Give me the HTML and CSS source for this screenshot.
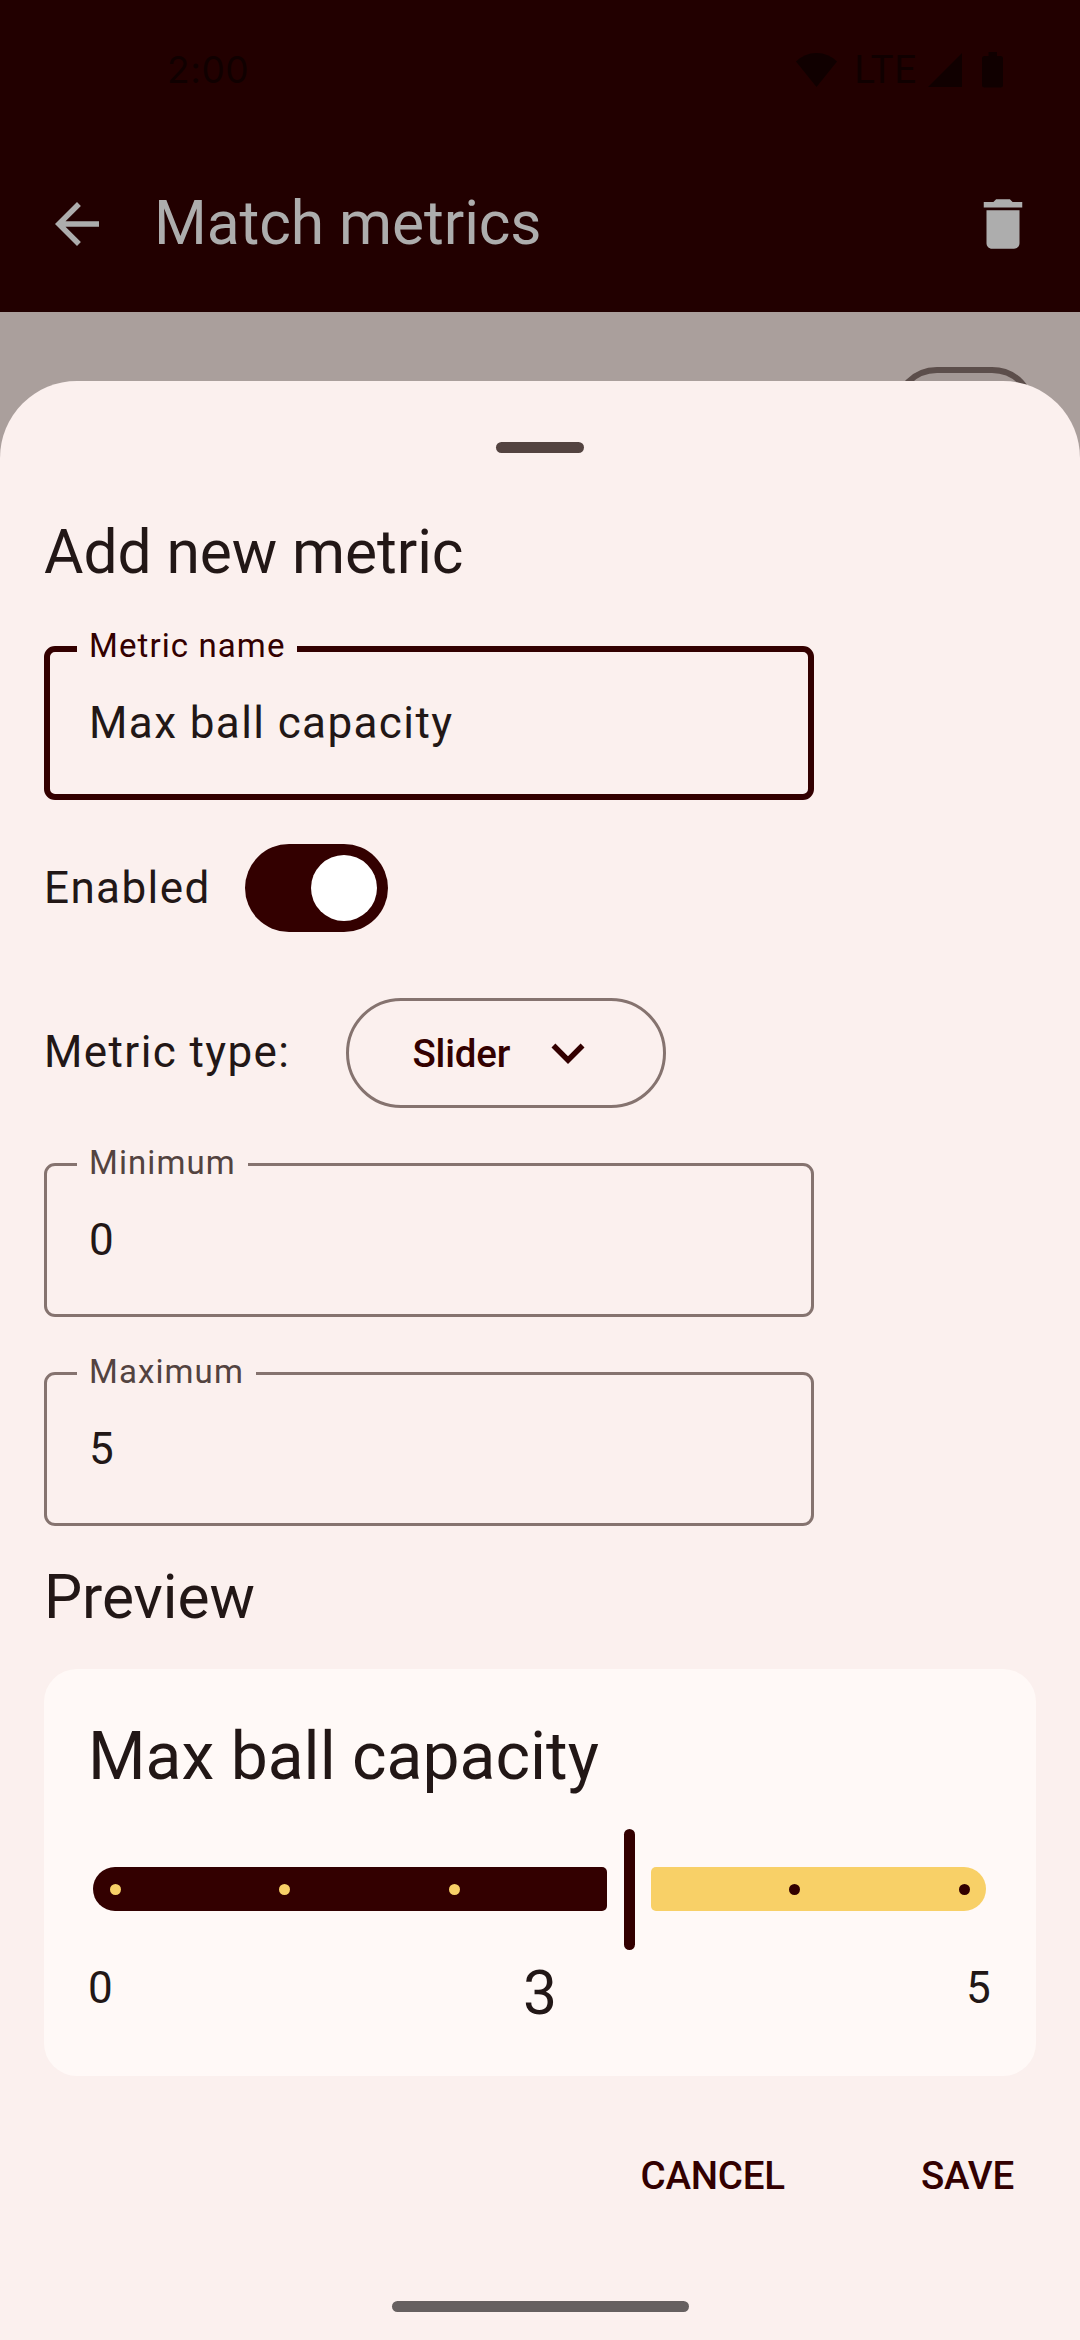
FILE: index.html
```html
<!DOCTYPE html>
<html lang="en">
<head>
<meta charset="utf-8">
<title>Match metrics</title>
<link rel="stylesheet" href="styles.css">
</head>
<body>
<div class="screen">
  <header class="top">
    <div class="status">
      <span class="clock">2:00</span>
      <div class="signals">
        <svg class="wifi" viewBox="0 0 41 34"><path d="M0 8.500Q8.500 0 20.500 0T41 8.500L20.500 34Z"/></svg>
        <span class="network">LTE</span>
        <svg class="cell" viewBox="0 0 34 34"><path d="M34 0V34H0Z"/></svg>
        <svg class="battery" viewBox="0 0 21 36"><path d="M6.500 0H15V4H18.500Q21 4 21 6.500V33Q21 35.500 18.500 35.500H2.500Q0 35.500 0 33V6.500Q0 4 2.500 4H6.500Z"/></svg>
      </div>
    </div>
    <div class="app-bar">
      <svg class="icon" viewBox="0 0 24 24"><path d="M20 11H7.830l5.590-5.590L12 4l-8 8 8 8 1.410-1.410L7.830 13H20z"/></svg>
      <h1 class="heading app-title">Match metrics</h1>
      <svg class="icon" viewBox="0 0 24 24"><path d="M6 19c0 1.100.9 2 2 2h8c1.100 0 2-.9 2-2V7H6zM19 4h-3.500l-1-1h-5l-1 1H5v2h14z"/></svg>
    </div>
  </header>
  <div class="list"><div class="list-switch"></div></div>

  <main class="sheet">
    <div class="handle"></div>
    <h2 class="heading">Add new metric</h2>
    <div class="field focused"><span class="label">Metric name</span><span class="value">Max ball capacity</span></div>
    <div class="row enabled">
      <span class="body">Enabled</span>
      <div class="switch"><div class="thumb"></div></div>
    </div>
    <div class="row type">
      <span class="body">Metric type:</span>
      <div class="select">
        <span>Slider</span>
        <svg class="icon" viewBox="0 0 24 24"><path d="M7.410 8.590L12 13.170l4.590-4.580L18 10l-6 6-6-6z"/></svg>
      </div>
    </div>
    <div class="field"><span class="label">Minimum</span><span class="value">0</span></div>
    <div class="field"><span class="label">Maximum</span><span class="value">5</span></div>
    <h2 class="heading preview-heading">Preview</h2>
    <section class="card">
      <h3 class="card-title">Max ball capacity</h3>
      <div class="slider">
        <div class="track active"><i class="dot"></i><i class="dot"></i><i class="dot"></i></div>
        <div class="slider-handle"></div>
        <div class="track rest"><i class="dot"></i><i class="dot"></i></div>
      </div>
      <div class="scale">
        <span class="min">0</span>
        <span class="current">3</span>
        <span class="max">5</span>
      </div>
    </section>
    <div class="actions"><span>CANCEL</span><span>SAVE</span></div>
    <div class="nav-pill"></div>
  </main>
</div>
</body>
</html>
```

FILE: styles.css
```css
* { box-sizing: border-box; }
body { margin: 0; font-family: Roboto, sans-serif; color: #221716; }
.screen { width: 1080px; height: 2340px; display: flex; flex-direction: column; background: #aa9f9c; overflow: hidden; }

.top { height: 312px; flex: none; background: #220000; color: #adadad; }
.status { height: 136px; padding: 4px 77px 0 167px; display: flex; justify-content: space-between; align-items: center; color: #100000; }
.clock { font: 400 37px/44px Inter, sans-serif; letter-spacing: 0.6px; }
.signals { display: flex; align-items: center; }
.signals svg { fill: currentColor; display: block; }
.wifi { width: 41px; height: 34px; }
.network { font: 400 38.500px/44px Roboto, sans-serif; letter-spacing: 0.8px; margin: 0 11px 0 17px; }
.cell { width: 34px; height: 34px; }
.battery { width: 21px; height: 36px; margin-left: 20px; }
.app-bar { height: 176px; padding: 0 44px; display: flex; align-items: center; }
.icon { width: 66px; height: 66px; fill: currentColor; display: block; flex: none; }
.heading { margin: 0; font-size: 60.500px; line-height: 77px; font-weight: 400; letter-spacing: -0.08px; }
.app-title { flex: 1; padding: 0 0 2px 44px; }

.list { height: 69px; flex: none; display: flex; justify-content: flex-end; padding: 55px 44px 0; }
.list-switch { flex: none; width: 143px; height: 88px; border: 6px solid #5c4e4b; border-radius: 44px; background: #a39895; }

.sheet { position: relative; flex: none; height: 1959px; padding: 61px 44px 0; background: #fbf0ee; border-radius: 77px 77px 0 0; display: flex; flex-direction: column; }
.handle { width: 88px; height: 11px; margin: 0 auto 61px; border-radius: 6px; background: #534340; }
.field { position: relative; width: 770px; height: 154px; margin-top: 55px; border: 3px solid #85736f; border-radius: 11px; }
.label { position: absolute; left: 30px; top: -25px; padding: 0 12px; background: #fbf0ee; color: #534340; font-size: 33px; line-height: 44px; letter-spacing: 1.100px; white-space: nowrap; }
.value { display: block; padding: 41px 0 0 42px; font-size: 44px; line-height: 66px; letter-spacing: 1.400px; }
.focused { border: 6px solid #330000; }
.focused .label { left: 27px; top: -28px; color: #330000; }
.focused .value { padding: 38px 0 0 39px; }
.row { display: flex; align-items: center; }
.body { font-size: 44px; line-height: 66px; letter-spacing: 1.400px; }
.enabled { margin-top: 44px; gap: 34px; }
.switch { width: 143px; height: 88px; padding: 11px; border-radius: 44px; background: #330000; display: flex; justify-content: flex-end; }
.thumb { width: 66px; height: 66px; border-radius: 50%; background: #fff; }
.type { margin-top: 66px; gap: 56px; }
.type .body { padding-bottom: 2px; }
.select { width: 320px; height: 110px; padding: 0 62px 0 63px; border: 3px solid #85736f; border-radius: 55px; display: flex; align-items: center; justify-content: space-between; color: #330000; font-size: 38.500px; font-weight: 500; letter-spacing: -0.2px; }
.preview-heading { margin: 33px 0; }

.card { height: 407px; flex: none; padding: 44px; border-radius: 33px; background: #fff9f7; }
.card-title { margin: 0 0 28px; font-size: 66px; line-height: 88px; font-weight: 400; }
.slider { height: 121px; padding: 0 6px 0 5px; display: flex; align-items: center; justify-content: space-between; }
.track { height: 44px; margin-bottom: 1px; display: flex; align-items: center; justify-content: space-between; }
.active { width: 514px; padding: 0 147px 0 16.500px; border-radius: 22px 5px 5px 22px; background: #330000; color: #f8d067; }
.rest { width: 335px; padding: 0 16.500px 0 137.500px; border-radius: 5px 22px 22px 5px; background: #f8d067; color: #330000; }
.dot { width: 11px; height: 11px; border-radius: 50%; background: currentColor; }
.slider-handle { width: 11px; height: 121px; border-radius: 6px; background: #330000; }
.scale { margin-top: 5px; display: grid; grid-template-columns: 1fr auto 1fr; align-items: start; font-size: 44px; line-height: 66px; letter-spacing: 1.375px; }
.current { font-size: 60.500px; line-height: 77px; letter-spacing: 0; }
.max { text-align: right; }

.actions { height: 110px; margin-top: 44px; padding-right: 22px; display: flex; align-items: center; justify-content: flex-end; gap: 136px; color: #330000; font-size: 38.500px; font-weight: 500; letter-spacing: -0.2px; }
.nav-pill { width: 297px; height: 11px; margin: 71px auto 0; border-radius: 6px; background: #666060; }
```
